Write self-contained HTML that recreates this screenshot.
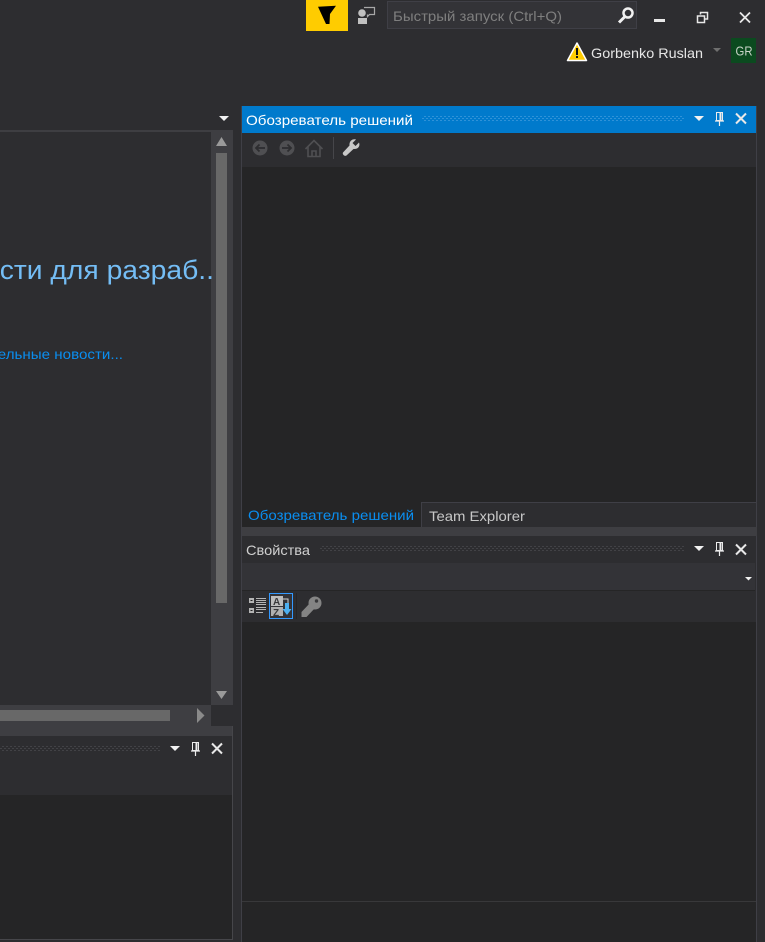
<!DOCTYPE html>
<html><head><meta charset="utf-8"><style>
html,body{margin:0;padding:0;background:#2d2d30;width:765px;height:942px;overflow:hidden}
svg{display:block}
text{font-family:"Liberation Sans","DejaVu Sans",sans-serif}
</style></head><body>
<svg width="765" height="942" viewBox="0 0 765 942" xmlns="http://www.w3.org/2000/svg">
<defs>
<pattern id="gb" width="4" height="4" patternUnits="userSpaceOnUse"><rect width="2" height="1" x="0" y="0" fill="#2f92d8"/><rect width="2" height="1" x="2" y="2" fill="#2f92d8"/></pattern>
<pattern id="gg" width="4" height="4" patternUnits="userSpaceOnUse"><rect width="2" height="1" x="0" y="0" fill="#424246"/><rect width="2" height="1" x="2" y="2" fill="#424246"/></pattern>
<g id="cap"><path d="M0 0H10L5 5Z" fill="#f1f1f1"/></g>
<g id="pin" fill="none" stroke="#ececec"><path d="M1.500 .5H7.500V8.500H1.500Z" stroke-width="1"/><path d="M5.500 1V8" stroke-width="2"/><path d="M0 9H9M4.500 9V14" stroke-width="1.200"/></g>
<g id="cls" fill="none" stroke="#e8e8e8" stroke-width="2"><path d="M1 .5L11 10.500M11 .5L1 10.500"/></g>
</defs>
<rect width="765" height="942" fill="#2d2d30"/>

<!-- title bar -->
<rect x="306" y="0" width="42" height="31" fill="#ffcc00"/>
<path d="M318 6.700L336 5.700L330 14L329.500 24H326Z" fill="#000"/>
<g fill="#c0c0c0"><circle cx="362" cy="13" r="3.800"/><path d="M358 18H367V24H358Z"/></g>
<path d="M364 7.500H374.500V14.500H369.500L367.500 16.500V14.500" fill="none" stroke="#a8a8a8" stroke-width="1.200"/>
<rect x="387.500" y="1.500" width="249" height="27" fill="#333337" stroke="#3f3f46"/>
<text x="393" y="21" font-size="14" fill="#7f7f7f" textLength="169" lengthAdjust="spacingAndGlyphs">Быстрый запуск (Ctrl+Q)</text>
<circle cx="628" cy="13" r="4.500" fill="none" stroke="#f1f1f1" stroke-width="2.500"/>
<path d="M624.500 17L619 22.500" stroke="#f1f1f1" stroke-width="3"/>
<rect x="654" y="19" width="11" height="3" fill="#e8e8e8"/>
<path d="M700.500 14.500V12.500H707.500V19H705M697.500 16H704.500V22.500H697.500Z" fill="none" stroke="#e8e8e8" stroke-width="1.500"/>
<path d="M740 12.500L750 22.500M750 12.500L740 22.500" stroke="#e8e8e8" stroke-width="1.800"/>

<!-- account -->
<path d="M577 43L586.500 60.500H567.500Z" fill="#ffcc00" stroke="#fff" stroke-width="1.500" stroke-linejoin="round"/>
<rect x="576" y="48" width="2" height="7" fill="#111"/><rect x="576" y="56" width="2" height="2" fill="#111"/>
<text x="591" y="58" font-size="14" fill="#e6e6e6" textLength="112" lengthAdjust="spacingAndGlyphs">Gorbenko Ruslan</text>
<path d="M713 48H721L717 52Z" fill="#6f6f6f"/>
<rect x="731" y="38" width="25" height="25" fill="#0b4a1f"/>
<text x="735.500" y="55.500" font-size="13" fill="#c8d4c8" textLength="17" lengthAdjust="spacingAndGlyphs">GR</text>

<!-- doc well -->
<use href="#cap" x="219" y="116"/>
<rect x="0" y="130" width="233" height="2" fill="#3e3e42"/>
<rect x="211" y="132" width="22" height="573" fill="#3e3e42"/>
<path d="M221.500 137L227 146H216Z" fill="#9a9a9a"/>
<rect x="216" y="153" width="11" height="450" fill="#686868"/>
<path d="M216 691H227L221.500 699Z" fill="#9a9a9a"/>
<text x="-16" y="279" font-size="27" fill="#74bdf5" textLength="230" lengthAdjust="spacingAndGlyphs">ости для разраб..</text>
<text x="-9" y="359" font-size="14" fill="#0a8ef0" textLength="132" lengthAdjust="spacingAndGlyphs">тельные новости...</text>

<!-- horizontal scrollbar -->
<rect x="0" y="705" width="211" height="21" fill="#3e3e42"/>
<rect x="0" y="710" width="170" height="11" fill="#686868"/>
<path d="M197 708L204.500 715.500L197 723Z" fill="#8a8a8a"/>
<rect x="211" y="705" width="21" height="21" fill="#2d2d30"/>
<rect x="0" y="726" width="232" height="10" fill="#3e3e42"/>

<!-- bottom left tool window -->
<rect x="0" y="745" width="160" height="6" fill="url(#gg)"/>
<use href="#cap" x="170" y="746"/>
<use href="#pin" x="191" y="742"/>
<use href="#cls" x="211" y="743"/>
<rect x="0" y="795" width="232" height="144" fill="#252526"/>
<rect x="232" y="726" width="1" height="214" fill="#46464a"/>
<rect x="0" y="939" width="233" height="1" fill="#46464a"/>

<!-- right column -->
<rect x="241" y="106" width="1" height="836" fill="#3f3f46"/>
<rect x="756" y="106" width="1" height="836" fill="#3f3f46"/>

<!-- solution explorer -->
<rect x="242" y="106" width="514" height="27" fill="#007acc"/>
<text x="246" y="125" font-size="14" fill="#fff" textLength="167" lengthAdjust="spacingAndGlyphs">Обозреватель решений</text>
<rect x="422" y="116" width="262" height="6" fill="url(#gb)"/>
<use href="#cap" x="694" y="116"/>
<use href="#pin" x="715" y="112"/>
<use href="#cls" x="735" y="113"/>
<g fill="#4f4f52"><circle cx="260" cy="148" r="7.500"/><circle cx="287" cy="148" r="7.500"/></g>
<path d="M265 148H256M259.500 144.500L256 148L259.500 151.500M282 148H291M287.500 144.500L291 148L287.500 151.500" fill="none" stroke="#2d2d30" stroke-width="1.800"/>
<path d="M305.500 149L314 140.500L322.500 149M308 147V156.500H320V147M312 156.500V151H316V156.500" fill="none" stroke="#4f4f52" stroke-width="1.600"/>
<rect x="333" y="137" width="1" height="22" fill="#46464a"/>
<path d="M359 142.500L355.500 146L352.500 143L356 139.500C352.500 138.500 349 141 349.500 145.500L343 152.500C342 154 344.500 157 346.500 155.500L353.500 149C358 149.500 360.500 146 359 142.500Z" fill="#c8c8c8"/>
<rect x="242" y="167" width="514" height="335" fill="#252526"/>
<rect x="421" y="502" width="336" height="1" fill="#3f3f46"/>

<!-- tabs -->
<rect x="242" y="502" width="179" height="25" fill="#252526"/>
<rect x="421" y="503" width="1" height="24" fill="#3f3f46"/>
<text x="248" y="520" font-size="14" fill="#0a8ef0" textLength="166" lengthAdjust="spacingAndGlyphs">Обозреватель решений</text>
<text x="429" y="521" font-size="14" fill="#c8c8c8" textLength="96" lengthAdjust="spacingAndGlyphs">Team Explorer</text>
<rect x="242" y="527" width="515" height="9" fill="#3e3e42"/>

<!-- properties -->
<text x="246" y="555" font-size="14" fill="#d0d0d0" textLength="64" lengthAdjust="spacingAndGlyphs">Свойства</text>
<rect x="320" y="546" width="364" height="6" fill="url(#gg)"/>
<use href="#cap" x="694" y="546"/>
<use href="#pin" x="715" y="542"/>
<use href="#cls" x="735" y="544"/>
<rect x="242" y="563" width="513" height="28" fill="#333337"/>
<rect x="242" y="590" width="513" height="1" fill="#252526"/>
<path d="M745 577H752L748.500 580.500Z" fill="#f1f1f1"/>
<g fill="#b4b4b4">
<rect x="249" y="598" width="5" height="5"/><rect x="249" y="608" width="5" height="5"/>
<rect x="256" y="598" width="10" height="1"/><rect x="256" y="600" width="10" height="1"/><rect x="256" y="602" width="10" height="1"/><rect x="256" y="604" width="10" height="1"/><rect x="256" y="607" width="10" height="1"/><rect x="256" y="609" width="10" height="1"/><rect x="256" y="612" width="7" height="1"/>
</g>
<rect x="250.500" y="600" width="2" height="1" fill="#222"/><rect x="250.500" y="610" width="2" height="1" fill="#222"/>
<rect x="269.500" y="593.500" width="23" height="25" fill="#333337" stroke="#3399ff"/>
<rect x="271" y="596" width="12" height="10" fill="#bdbdbd"/><rect x="271" y="607" width="12" height="9" fill="#b0b0b0"/>
<text x="273" y="605" font-size="10" font-weight="bold" fill="#3a3a3c">A</text>
<text x="273" y="616" font-size="10" font-weight="bold" fill="#3a3a3c">Z</text>
<path d="M283 599H288V604" fill="none" stroke="#d0d0d0"/>
<path d="M285 603H289V609H291.500L287 615L282.500 609H285Z" fill="#4db0f0"/>
<rect x="296" y="593" width="1" height="26" fill="#252526"/>
<circle cx="315" cy="603" r="6.500" fill="#848484"/>
<path d="M311 602L301.500 612L301.500 617L306.500 617L316 607Z" fill="#848484"/>
<circle cx="316.500" cy="601" r="1.700" fill="#3a3a3c"/>
<rect x="242" y="622" width="514" height="320" fill="#252526"/>
<rect x="242" y="901" width="514" height="1" fill="#38383a"/>
</svg>
</body></html>
